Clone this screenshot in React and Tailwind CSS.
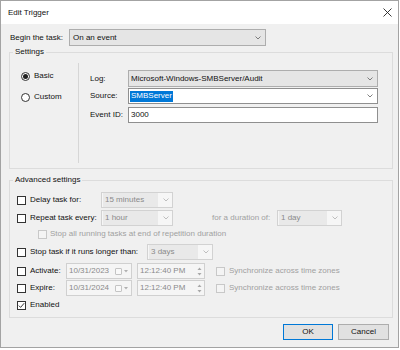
import React from "react";

function Chevron({ color = "#606060" }) {
  return (
    <svg width="6" height="4" viewBox="0 0 6 4" className="shrink-0">
      <polyline points="0.5,0.5 3,3 5.5,0.5" fill="none" stroke={color} strokeWidth="0.8" />
    </svg>
  );
}

function Checkbox({ checked = false, disabled = false }) {
  return (
    <div
      className={
        disabled
          ? "w-[9px] h-[9px] border border-[#c8c8c8] bg-[#f4f4f4] shrink-0"
          : "w-[9px] h-[9px] border border-[#333333] bg-white shrink-0 flex items-center justify-center"
      }
    >
      {checked && (
        <svg width="7" height="7" viewBox="0 0 7 7">
          <polyline points="0.8,3.6 2.6,5.4 6.2,1.2" fill="none" stroke="#222" strokeWidth="0.9" />
        </svg>
      )}
    </div>
  );
}

function Radio({ checked = false }) {
  return (
    <div className="w-[9px] h-[9px] rounded-full border border-[#333333] bg-white shrink-0 flex items-center justify-center">
      {checked && <div className="w-[5px] h-[5px] rounded-full bg-[#222]" />}
    </div>
  );
}

function DisabledCombo({ value, w }) {
  return (
    <div className={`${w} h-[16px] border border-[#d2d2d2] bg-[#f6f6f6] flex items-center shrink-0`}>
      <div className="flex-1 h-full bg-[#e9e9e9] text-[#8a8a8a] flex items-center pl-[2px] m-[1px] h-[12px]">
        {value}
      </div>
      <div className="w-[13px] flex items-center justify-center">
        <Chevron color="#b0b0b0" />
      </div>
    </div>
  );
}

function DateField({ value }) {
  return (
    <div className="w-[66px] h-[16px] border border-[#d0d0d0] bg-[#f5f5f5] flex items-center shrink-0 pl-[2px] pr-[3px]">
      <span className="flex-1 text-[#8a8a8a]">{value}</span>
      <div className="w-[7px] h-[7px] border border-[#c4c4c4] rounded-[1px] bg-[#f9f9f9]" />
      <svg width="4" height="3" viewBox="0 0 4 3" className="ml-[2px]">
        <polygon points="0,0 4,0 2,2.5" fill="#b0b0b0" />
      </svg>
    </div>
  );
}

function TimeField({ value }) {
  return (
    <div className="w-[68px] h-[16px] border border-[#d0d0d0] bg-[#f5f5f5] flex items-center shrink-0 pl-[2px] pr-[2px]">
      <span className="flex-1 text-[#8a8a8a]">{value}</span>
      <svg width="5" height="11" viewBox="0 0 5 11">
        <polygon points="0.5,4 4.5,4 2.5,1.5" fill="#a8a8a8" />
        <polygon points="0.5,7 4.5,7 2.5,9.5" fill="#a8a8a8" />
      </svg>
    </div>
  );
}

export default function App() {
  return (
    <div className="w-[400px] h-[350px] bg-white font-['Liberation_Sans',Arial,sans-serif] text-[8px] text-[#111] leading-none">
      <div className="w-[399px] h-[348px] border border-[#a3a3a3] bg-[#f0f0f0] flex flex-col">
        {/* Title bar */}
        <div className="h-[23px] bg-white flex items-center justify-between pl-[7px] pr-[6px] shrink-0">
          <span>Edit Trigger</span>
          <svg width="9" height="9" viewBox="0 0 9 9">
            <path d="M0.5 0.5L8.5 8.5M8.5 0.5L0.5 8.5" stroke="#222" strokeWidth="0.9" />
          </svg>
        </div>

        {/* Begin the task */}
        <div className="mt-[5px] h-[17px] pl-[9px] flex items-center shrink-0">
          <span className="w-[59px]">Begin the task:</span>
          <div className="w-[197px] h-[17px] border border-[#adadad] bg-[#e5e5e5] flex items-center justify-between pl-[3px] pr-[4px]">
            <span>On an event</span>
            <Chevron />
          </div>
        </div>

        {/* Settings group */}
        <div className="mt-[6px] ml-[8px] w-[384px] h-[117px] relative border border-[#dcdcdc] flex shrink-0">
          <span className="absolute left-[3px] -top-[6px] px-[2px] bg-[#f0f0f0] leading-[10px]">Settings</span>
          <div className="w-[68px] flex flex-col pt-[17px] gap-[9px] pl-[11px]">
            <div className="h-[12px] flex items-center gap-[4px]">
              <Radio checked />
              <span>Basic</span>
            </div>
            <div className="h-[12px] flex items-center gap-[4px]">
              <Radio />
              <span>Custom</span>
            </div>
          </div>
          <div className="w-[1px] h-[100px] mt-[10px] bg-[#d6d6d6]" />
          <div className="pl-[11px] pt-[17px] flex flex-col">
            <div className="h-[17px] flex items-center">
              <span className="w-[38px]">Log:</span>
              <div className="w-[250px] h-[17px] border border-[#adadad] bg-[#e5e5e5] flex items-center justify-between pl-[2px] pr-[4px]">
                <span>Microsoft-Windows-SMBServer/Audit</span>
                <Chevron />
              </div>
            </div>
            <div className="mt-[1px] h-[16px] flex items-center">
              <span className="w-[38px]">Source:</span>
              <div className="w-[250px] h-[16px] border border-[#8f8f8f] bg-white flex items-center justify-between pl-[1px] pr-[4px]">
                <span className="bg-[#0078d7] text-white px-[1px] h-[11px] flex items-center">SMBServer</span>
                <Chevron />
              </div>
            </div>
            <div className="mt-[3px] h-[16px] flex items-center">
              <span className="w-[38px]">Event ID:</span>
              <div className="w-[250px] h-[16px] border border-[#8f8f8f] bg-white flex items-center pl-[2px]">
                <span>3000</span>
              </div>
            </div>
          </div>
        </div>

        {/* Advanced settings group */}
        <div className="mt-[11px] ml-[8px] w-[384px] h-[138px] relative border border-[#dcdcdc] flex flex-col shrink-0">
          <span className="absolute left-[3px] -top-[6px] px-[2px] bg-[#f0f0f0] leading-[10px]">Advanced settings</span>

          <div className="mt-[11px] h-[16px] pl-[7px] flex items-center">
            <Checkbox />
            <span className="ml-[4px] w-[71px]">Delay task for:</span>
            <DisabledCombo value="15 minutes" w="w-[72px]" />
          </div>

          <div className="mt-[2px] h-[16px] pl-[7px] flex items-center">
            <Checkbox />
            <span className="ml-[4px] w-[71px]">Repeat task every:</span>
            <DisabledCombo value="1 hour" w="w-[72px]" />
            <span className="ml-[39px] w-[65px] text-[#a0a0a0]">for a duration of:</span>
            <DisabledCombo value="1 day" w="w-[65px]" />
          </div>

          <div className="mt-[1px] h-[14px] pl-[28px] flex items-center">
            <Checkbox disabled />
            <span className="ml-[3px] text-[#a0a0a0]">Stop all running tasks at end of repetition duration</span>
          </div>

          <div className="mt-[3px] h-[16px] pl-[7px] flex items-center">
            <Checkbox />
            <span className="ml-[4px] w-[117px]">Stop task if it runs longer than:</span>
            <DisabledCombo value="3 days" w="w-[66px]" />
          </div>

          <div className="mt-[3px] h-[16px] pl-[7px] flex items-center">
            <Checkbox />
            <span className="ml-[4px] w-[36px]">Activate:</span>
            <DateField value="10/31/2023" />
            <div className="ml-[5px]">
              <TimeField value="12:12:40 PM" />
            </div>
            <div className="ml-[11px]">
              <Checkbox disabled />
            </div>
            <span className="ml-[4px] text-[#a0a0a0]">Synchronize across time zones</span>
          </div>

          <div className="mt-[1px] h-[16px] pl-[7px] flex items-center">
            <Checkbox />
            <span className="ml-[4px] w-[36px]">Expire:</span>
            <DateField value="10/31/2024" />
            <div className="ml-[5px]">
              <TimeField value="12:12:40 PM" />
            </div>
            <div className="ml-[11px]">
              <Checkbox disabled />
            </div>
            <span className="ml-[4px] text-[#a0a0a0]">Synchronize across time zones</span>
          </div>

          <div className="mt-[2px] h-[14px] pl-[7px] flex items-center">
            <Checkbox checked />
            <span className="ml-[4px]">Enabled</span>
          </div>
        </div>

        {/* Buttons */}
        <div className="mt-[6px] h-[16px] flex justify-end pr-[9px] gap-[5px] shrink-0">
          <div className="w-[50px] h-[16px] border border-[#0078d7] bg-[#e1e1e1] flex items-center justify-center">OK</div>
          <div className="w-[51px] h-[16px] border border-[#adadad] bg-[#e1e1e1] flex items-center justify-center">Cancel</div>
        </div>
      </div>
    </div>
  );
}
